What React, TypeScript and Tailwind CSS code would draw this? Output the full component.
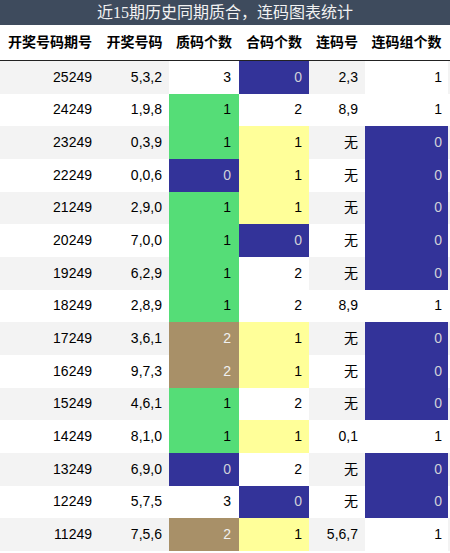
import React from "react";

type Row = [string, string, number, number, string, number];

const rows: Row[] = [
  ["25249", "5,3,2", 3, 0, "2,3", 1],
  ["24249", "1,9,8", 1, 2, "8,9", 1],
  ["23249", "0,3,9", 1, 1, "无", 0],
  ["22249", "0,0,6", 0, 1, "无", 0],
  ["21249", "2,9,0", 1, 1, "无", 0],
  ["20249", "7,0,0", 1, 0, "无", 0],
  ["19249", "6,2,9", 1, 2, "无", 0],
  ["18249", "2,8,9", 1, 2, "8,9", 1],
  ["17249", "3,6,1", 2, 1, "无", 0],
  ["16249", "9,7,3", 2, 1, "无", 0],
  ["15249", "4,6,1", 1, 2, "无", 0],
  ["14249", "8,1,0", 1, 1, "0,1", 1],
  ["13249", "6,9,0", 0, 2, "无", 0],
  ["12249", "5,7,5", 3, 0, "无", 0],
  ["11249", "7,5,6", 2, 1, "5,6,7", 1],
];

const primeCls = (v: number) =>
  v === 0
    ? "bg-[#333399] text-[#d0d0d8]"
    : v === 1
    ? "bg-[#55dd77] text-black"
    : v === 2
    ? "bg-[#a89068] text-[#f0f0f0]"
    : "bg-white text-black";

const compCls = (v: number) =>
  v === 0
    ? "bg-[#333399] text-[#d0d0d8]"
    : v === 1
    ? "bg-[#ffff99] text-black"
    : "bg-white text-black";

const groupCls = (v: number) =>
  v === 0 ? "bg-[#333399] text-[#d0d0d8]" : "bg-white text-black";

const grid = "grid grid-cols-[100px_69px_70px_70px_56px_83px] w-[448px]";

export default function App() {
  return (
    <div
      className="w-[450px] h-[553px] bg-white overflow-hidden"
      style={{ fontFamily: '"Liberation Sans", "Noto Sans CJK SC", sans-serif' }}
    >
      <div
        className="h-[25px] bg-[#3e4b5d] text-[#f2f2f2] text-[16px] flex items-center justify-center leading-none"
        style={{ fontFamily: '"Liberation Serif", "Noto Sans CJK SC", serif' }}
      >
        近15期历史同期质合，连码图表统计
      </div>
      <div className="h-[36px] border-b border-[#222]">
        <div className={`${grid} h-full text-[14px] font-bold text-black`}>
          {["开奖号码期号", "开奖号码", "质码个数", "合码个数", "连码号", "连码组个数"].map((h) => (
            <div key={h} className="flex items-center justify-center whitespace-nowrap">
              {h}
            </div>
          ))}
        </div>
      </div>
      {rows.map((r, i) => (
        <div key={r[0]} className={`h-[32.67px] ${i % 2 === 0 ? "bg-[#f3f3f3]" : "bg-white"}`}>
          <div className={`${grid} h-full text-[14px] text-black`}>
            <div className="flex items-center justify-end pr-[8px]">{r[0]}</div>
            <div className="flex items-center justify-end pr-[7px]">{r[1]}</div>
            <div className={`flex items-center justify-end pr-[8px] ${primeCls(r[2])}`}>{r[2]}</div>
            <div className={`flex items-center justify-end pr-[7px] ${compCls(r[3])}`}>{r[3]}</div>
            <div className="flex items-center justify-end pr-[7px]">{r[4]}</div>
            <div className={`flex items-center justify-end pr-[6px] ${groupCls(r[5])}`}>{r[5]}</div>
          </div>
        </div>
      ))}
    </div>
  );
}
